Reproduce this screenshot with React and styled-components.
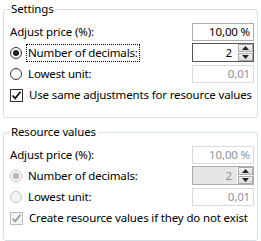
import React from 'react'
import styled, { createGlobalStyle } from 'styled-components';

const Global = createGlobalStyle`
  html, body { margin: 0; padding: 0; background: #ffffff; }
  body { font-family: "Noto Sans", "Liberation Sans", sans-serif; font-size: 11.5px; letter-spacing: -0.15px; color: #000; }
`

const Page = styled.div`
  width: 261px;
  padding-top: 1px;
  display: flex;
  flex-direction: column;
  gap: 6px;
`

const Group = styled.fieldset`
  margin: 0 3px;
  padding: 0 3px 11px 6px;
  border: 1px solid #d5dfe5;
  border-radius: 3px;
  min-width: 0;
`

const Legend = styled.legend`
  padding: 0 2px 0 1px;
  line-height: 16px;
  height: 16px;
`

const Rows = styled.div`
  margin-top: 4px;
  display: flex;
  flex-direction: column;
`

const Row = styled.div`
  display: flex;
  align-items: center;
  justify-content: space-between;
  height: ${p => p.h || 21}px;
`

const Label = styled.span`
  line-height: 16px;
  white-space: nowrap;
`

const Choice = styled.label`
  display: flex;
  align-items: center;
  gap: 5px;
  white-space: nowrap;
`

const FocusText = styled.span`
  line-height: 16px;
  padding: 0 1px;
  outline: ${p => p.focus ? '1px dotted #000' : 'none'};
`

const Radio = styled.span`
  box-sizing: border-box;
  width: 12px;
  height: 12px;
  border-radius: 50%;
  border: 1px solid ${p => p.disabled ? '#c6c6c6' : '#333'};
  background: ${p => p.disabled ? '#f4f4f4' : '#fff'};
  display: flex;
  align-items: center;
  justify-content: center;
  &::after {
    content: '';
    width: 6px;
    height: 6px;
    border-radius: 50%;
    background: ${p => p.disabled ? '#b5b5b5' : '#222'};
    display: ${p => p.checked ? 'block' : 'none'};
  }
`

const Check = styled.span`
  box-sizing: border-box;
  width: 13px;
  height: 13px;
  border: 1px solid ${p => p.disabled ? '#bcbcbc' : '#333'};
  background: ${p => p.disabled ? '#f4f4f4' : '#fff'};
  display: flex;
  align-items: center;
  justify-content: center;
  svg { display: block; }
`

const TextBox = styled.div`
  box-sizing: border-box;
  width: 62px;
  height: 18px;
  border: 1px solid ${p => p.disabled ? '#d9d9d9' : '#abadb3'};
  color: ${p => p.disabled ? '#8c939f' : '#000'};
  background: #fff;
  text-align: right;
  padding: 0 3px;
  line-height: 16px;
`

const Spinner = styled.div`
  box-sizing: border-box;
  width: 62px;
  height: 19px;
  display: flex;
  border: 1px solid ${p => p.disabled ? '#adadad' : '#555'};
  background: ${p => p.disabled ? '#e6e6e6' : '#fff'};
  color: ${p => p.disabled ? '#8c939f' : '#000'};
`

const SpinValue = styled.span`
  flex: 1;
  text-align: right;
  line-height: 17px;
  padding-right: 5px;
`

const SpinButtons = styled.div`
  width: 15px;
  display: flex;
  flex-direction: column;
  gap: 1px;
  background: #fff;
  padding-left: 1px;
`

const SpinButton = styled.div`
  flex: 1;
  background: linear-gradient(#f2f2f2, #dcdcdc);
  border: 1px solid #acacac;
  display: flex;
  align-items: center;
  justify-content: center;
  svg { display: block; }
`

const Tick = ({ disabled }) => (
  <svg width="11" height="11" viewBox="0 0 11 11">
    <path d="M1.5 5.5 L4.2 8.3 L9.5 1.8" fill="none" stroke={disabled ? '#9a9a9a' : '#111'} strokeWidth="1.8" />
  </svg>
)

const Arrow = ({ up }) => (
  <svg width="7" height="4" viewBox="0 0 7 4">
    <path d={up ? 'M0 4 L3.5 0 L7 4 Z' : 'M0 0 L3.5 4 L7 0 Z'} fill="#222" />
  </svg>
)

const Section = ({ title, disabled, check, focus }) => (
  <Group>
    <Legend>{title}</Legend>
    <Rows>
      <Row>
        <Label>Adjust price (%):</Label>
        <TextBox disabled={disabled}>10,00 %</TextBox>
      </Row>
      <Row>
        <Choice>
          <Radio checked disabled={disabled} />
          <FocusText focus={focus}>Number of decimals:</FocusText>
        </Choice>
        <Spinner disabled={disabled}>
          <SpinValue>2</SpinValue>
          <SpinButtons>
            <SpinButton><Arrow up /></SpinButton>
            <SpinButton><Arrow /></SpinButton>
          </SpinButtons>
        </Spinner>
      </Row>
      <Row>
        <Choice>
          <Radio disabled={disabled} />
          <FocusText>Lowest unit:</FocusText>
        </Choice>
        <TextBox disabled>0,01</TextBox>
      </Row>
      <Row h={22}>
        <Choice>
          <Check disabled={disabled}><Tick disabled={disabled} /></Check>
          <FocusText>{check}</FocusText>
        </Choice>
      </Row>
    </Rows>
  </Group>
)

const App = () => {
  return (
    <Page>
      <Global />
      <Section title="Settings" focus check="Use same adjustments for resource values" />
      <Section title="Resource values" disabled check="Create resource values if they do not exist" />
    </Page>
  )
}

export default App;
